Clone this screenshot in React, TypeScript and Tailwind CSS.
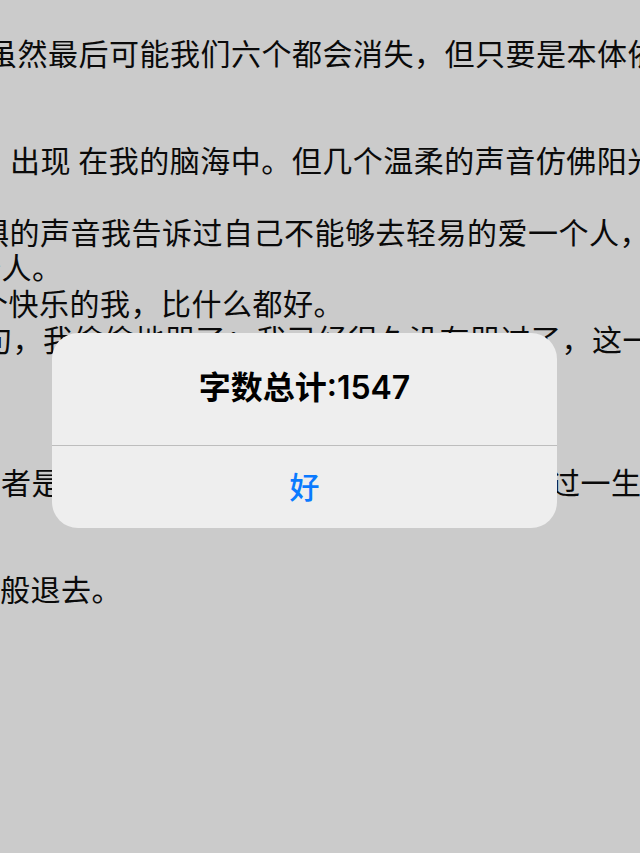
import React from "react";

const lines: { text: string; ml: string }[] = [
  { text: "虽然最后可能我们六个都会消失，但只要是本体依然", ml: "ml-[-13px]" },
  { text: "", ml: "" },
  { text: "", ml: "" },
  { text: "出现 在我的脑海中。但几个温柔的声音仿佛阳光般", ml: "ml-[10px]" },
  { text: "", ml: "" },
  { text: "惧的声音我告诉过自己不能够去轻易的爱一个人，", ml: "ml-[-21px]" },
  { text: "个人。", ml: "ml-[-29px]" },
  { text: "个快乐的我，比什么都好。", ml: "ml-[-22px]" },
  { text: "句，我偷偷地哭了：我已经很久没有哭过了，这一", ml: "ml-[-18px]" },
  { text: "", ml: "" },
  { text: "", ml: "" },
  { text: "", ml: "" },
  { text: "者是他们中的谁，我都愿意和他们一起度过一生", ml: "ml-[1px]" },
  { text: "", ml: "" },
  { text: "", ml: "" },
  { text: "般退去。", ml: "ml-[0px]" },
];

export default function App() {
  return (
    <div className="relative h-[853px] w-[640px] overflow-hidden bg-[#cbcbcb]">
      <div className="pt-[35px] font-['Noto_Sans_CJK_SC',sans-serif] text-[30px] leading-[35.73px] tracking-[0.5px] text-[#0a0a0a] whitespace-nowrap">
        {lines.map((l, i) => (
          <div key={i} className={`h-[35.73px] ${l.ml}`}>
            {l.text}
          </div>
        ))}
      </div>

      <div className="absolute left-[52px] top-[333px] flex h-[195px] w-[505px] flex-col overflow-hidden rounded-[26px] bg-[#eeeeee]">
        <div className="flex h-[112px] items-center justify-center pb-[2px] font-['Inter','Noto_Sans_CJK_SC',sans-serif] text-[32px] font-semibold text-black">
          字数总计:1547
        </div>
        <div className="h-px bg-[#bdbdbd]" />
        <div className="flex flex-1 items-center justify-center pb-[4px] font-['Noto_Sans_CJK_SC',sans-serif] text-[30px] font-medium text-[#0a7aff]">
          好
        </div>
      </div>
    </div>
  );
}
